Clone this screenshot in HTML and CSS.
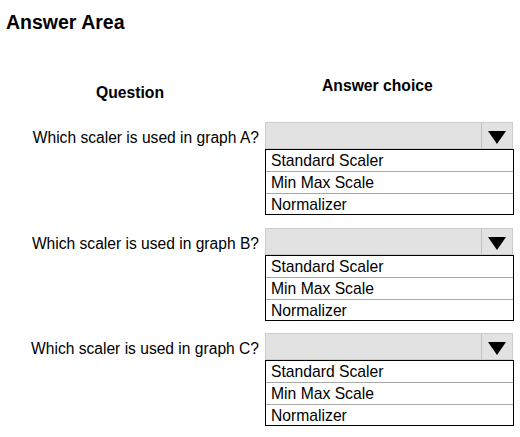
FILE: index.html
```html
<!DOCTYPE html>
<html lang="en">
<head>
    <meta charset="UTF-8">
    <meta name="viewport" content="width=device-width, initial-scale=1.0">
    <title>Answer Area</title>
    <link rel="stylesheet" href="styles.css">
</head>
<body>
    <div class="answer-area">
        <h1>Answer Area</h1>
        <div class="table">
            <div class="head question-head">Question</div>
            <div class="head answer-head">Answer choice</div>

            <div class="question">Which scaler is used in graph A?</div>
            <div class="dropdown">
                <div class="dropdown-bar">
                    <span class="dropdown-btn">
                        <svg width="18" height="13" viewBox="0 0 18 13"><path d="M0 0H18L9 13Z" fill="#000"/></svg>
                    </span>
                </div>
                <ul class="dropdown-list">
                    <li>Standard Scaler</li>
                    <li>Min Max Scale</li>
                    <li>Normalizer</li>
                </ul>
            </div>

            <div class="question">Which scaler is used in graph B?</div>
            <div class="dropdown">
                <div class="dropdown-bar">
                    <span class="dropdown-btn">
                        <svg width="18" height="13" viewBox="0 0 18 13"><path d="M0 0H18L9 13Z" fill="#000"/></svg>
                    </span>
                </div>
                <ul class="dropdown-list">
                    <li>Standard Scaler</li>
                    <li>Min Max Scale</li>
                    <li>Normalizer</li>
                </ul>
            </div>

            <div class="question">Which scaler is used in graph C?</div>
            <div class="dropdown">
                <div class="dropdown-bar">
                    <span class="dropdown-btn">
                        <svg width="18" height="13" viewBox="0 0 18 13"><path d="M0 0H18L9 13Z" fill="#000"/></svg>
                    </span>
                </div>
                <ul class="dropdown-list">
                    <li>Standard Scaler</li>
                    <li>Min Max Scale</li>
                    <li>Normalizer</li>
                </ul>
            </div>
        </div>
    </div>
</body>
</html>
```

FILE: styles.css
```css
body {
    margin: 0;
    background: #fff;
    color: #000;
    font-family: "Liberation Sans", Arial, sans-serif;
}
.answer-area {
    padding: 11px 6px 0 6px;
}
h1 {
    margin: 0;
    font-size: 19.5px;
    line-height: 22px;
    font-weight: bold;
}
.table {
    display: grid;
    grid-template-columns: 253px 249px;
    column-gap: 6px;
    align-items: start;
    margin-top: 43.5px;
}
.head {
    font-size: 15.7px;
    line-height: 18px;
    font-weight: bold;
}
.question-head {
    padding-top: 7px;
    padding-right: 5px;
    text-align: center;
}
.answer-head {
    padding-left: 57px;
}
.question {
    font-size: 15.6px;
    line-height: 27px;
    padding-top: 2px;
    text-align: right;
    white-space: nowrap;
    margin-top: 12.5px;
}
.dropdown {
    margin-top: 12.5px;
}
.table .question:nth-child(3),
.table .dropdown:nth-child(4) {
    margin-top: 20.5px;
}
.dropdown-bar {
    box-sizing: border-box;
    width: 248px;
    height: 27px;
    background: #e2e2e2;
    border: 1px solid #cbcbcb;
    display: flex;
    justify-content: flex-end;
}
.dropdown-btn {
    width: 31px;
    border-left: 1px solid #c2c2c2;
    display: flex;
    align-items: center;
    justify-content: center;
    padding-top: 4px;
    box-sizing: border-box;
}
.dropdown-btn svg {
    display: block;
}
.dropdown-list {
    list-style: none;
    margin: 0;
    padding: 0;
    border: 1px solid #000;
    font-size: 15.7px;
}
.dropdown-list li {
    height: 21px;
    line-height: 21px;
    padding-left: 5px;
    border-top: 1px solid #a8a8a8;
}
.dropdown-list li:first-child {
    border-top: none;
}
.dropdown-list li:last-child {
    height: 20px;
}
```
